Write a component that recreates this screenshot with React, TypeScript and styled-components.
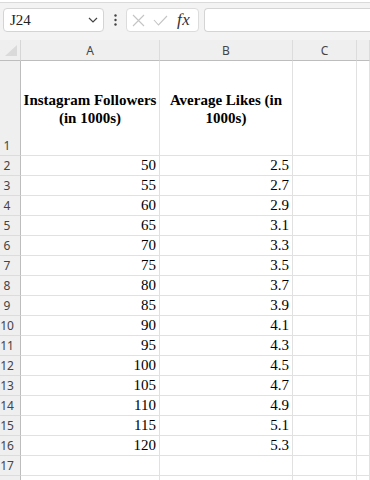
import React from "react";
import styled, { createGlobalStyle } from "styled-components";

const Global = createGlobalStyle`
  html, body { margin: 0; padding: 0; background: #ffffff; }
  body { font-family: "Noto Sans", "Liberation Sans", sans-serif; overflow: hidden; }
  * { box-sizing: border-box; }
`;

const Page = styled.div`
  width: 370px;
  height: 480px;
  overflow: hidden;
  background: #ffffff;
`;

const TopStrip = styled.div`
  height: 3px;
  background: #ffffff;
  border-bottom: 1px solid #dadada;
  box-shadow: 0 1px 2px rgba(0, 0, 0, 0.06);
`;

const FormulaBar = styled.div`
  height: 37px;
  background: #f3f3f3;
  display: flex;
  align-items: flex-start;
  padding: 5px 0 0 3px;
`;

const NameBox = styled.div`
  width: 101px;
  height: 24px;
  background: #ffffff;
  border: 1px solid #d4d4d4;
  border-radius: 4px;
  display: flex;
  align-items: center;
  justify-content: space-between;
  padding: 0 5px 0 6px;
  font-family: "Liberation Serif", serif;
  font-size: 15px;
  color: #222;
`;

const MoreDots = styled.div`
  width: 22px;
  height: 24px;
  display: flex;
  align-items: center;
  justify-content: center;
`;

const FxGroup = styled.div`
  width: 73px;
  height: 24px;
  background: #ffffff;
  border: 1px solid #dcdcdc;
  border-radius: 4px;
  display: flex;
  align-items: center;
  padding: 0 4px 0 5px;
  gap: 8px;
`;

const FxText = styled.span`
  font-family: "Liberation Serif", serif;
  font-style: italic;
  font-size: 17px;
  color: #333;
  margin-left: 1px;
  letter-spacing: 0.5px;
`;

const FormulaInput = styled.div`
  margin-left: 5px;
  flex: 1;
  height: 24px;
  background: #ffffff;
  border: 1px solid #d4d4d4;
  border-right: none;
  border-radius: 4px 0 0 4px;
`;

const Sheet = styled.div`
  display: grid;
  grid-template-columns: 21px 139px 133px 64px 1fr;
`;

const Corner = styled.div`
  height: 21px;
  background: #efefef;
  border-right: 1px solid #d6d6d6;
  border-bottom: 1px solid #bdbdbd;
  position: relative;
`;

const CornerTriangle = styled.div`
  position: absolute;
  left: 5px;
  top: 5px;
  width: 0;
  height: 0;
  border-left: 12px solid transparent;
  border-bottom: 11px solid #dadada;
`;

const ColHeader = styled.div`
  height: 21px;
  background: #efefef;
  border-right: 1px solid #dcdcdc;
  border-bottom: 1px solid #bdbdbd;
  display: flex;
  align-items: center;
  justify-content: center;
  font-size: 12px;
  color: #444;
  padding-top: 1px;
`;

const RowHeader = styled.div<{ $tall?: boolean }>`
  height: ${(p) => (p.$tall ? 95 : 20)}px;
  background: #efefef;
  border-right: 1px solid #bdbdbd;
  border-bottom: 1px solid #dcdcdc;
  display: flex;
  align-items: flex-end;
  justify-content: center;
  padding: 0 6px 1px 0;
  font-size: 12px;
  color: #444;
  line-height: 16px;
`;

const Cell = styled.div<{ $tall?: boolean }>`
  height: ${(p) => (p.$tall ? 95 : 20)}px;
  background: #ffffff;
  border-right: 1px solid #e1e1e1;
  border-bottom: 1px solid #e1e1e1;
  display: flex;
  align-items: flex-end;
  justify-content: flex-end;
  padding: 0 3px 1px 0;
  font-family: "Liberation Serif", serif;
  font-size: 15px;
  line-height: 17px;
  color: #000;
`;

const HeadCell = styled(Cell)`
  align-items: center;
  justify-content: center;
  text-align: center;
  padding: 2px 0 0 0;
  font-weight: bold;
  line-height: 18px;
`;

const data: [number, string][] = [
  [50, "2.5"],
  [55, "2.7"],
  [60, "2.9"],
  [65, "3.1"],
  [70, "3.3"],
  [75, "3.5"],
  [80, "3.7"],
  [85, "3.9"],
  [90, "4.1"],
  [95, "4.3"],
  [100, "4.5"],
  [105, "4.7"],
  [110, "4.9"],
  [115, "5.1"],
  [120, "5.3"],
];

export default function App() {
  return (
    <Page>
      <Global />
      <TopStrip />
      <FormulaBar>
        <NameBox>
          <span>J24</span>
          <svg width="10" height="6" viewBox="0 0 10 6">
            <path d="M1 1 L5 5 L9 1" fill="none" stroke="#444" strokeWidth="1.2" />
          </svg>
        </NameBox>
        <MoreDots>
          <svg width="3" height="12" viewBox="0 0 3 12">
            <circle cx="1.5" cy="1.5" r="1.2" fill="#444" />
            <circle cx="1.5" cy="6" r="1.2" fill="#444" />
            <circle cx="1.5" cy="10.5" r="1.2" fill="#444" />
          </svg>
        </MoreDots>
        <FxGroup>
          <svg width="13" height="13" viewBox="0 0 13 13">
            <path d="M1 1 L12 12 M12 1 L1 12" stroke="#c4c4c4" strokeWidth="1.1" fill="none" />
          </svg>
          <svg width="15" height="11" viewBox="0 0 15 11">
            <path d="M1 5 L5.5 10 L14 1" stroke="#c4c4c4" strokeWidth="1.1" fill="none" />
          </svg>
          <FxText>fx</FxText>
        </FxGroup>
        <FormulaInput />
      </FormulaBar>
      <Sheet>
        <Corner>
          <CornerTriangle />
        </Corner>
        <ColHeader>A</ColHeader>
        <ColHeader>B</ColHeader>
        <ColHeader>C</ColHeader>
        <ColHeader />

        <RowHeader $tall>1</RowHeader>
        <HeadCell $tall>
          Instagram Followers
          <br />
          (in 1000s)
        </HeadCell>
        <HeadCell $tall>
          Average Likes (in
          <br />
          1000s)
        </HeadCell>
        <Cell $tall />
        <Cell $tall />

        {data.map(([a, b], i) => (
          <React.Fragment key={i}>
            <RowHeader>{i + 2}</RowHeader>
            <Cell>{a}</Cell>
            <Cell>{b}</Cell>
            <Cell />
            <Cell />
          </React.Fragment>
        ))}
        <RowHeader>17</RowHeader>
        <Cell />
        <Cell />
        <Cell />
        <Cell />
        <RowHeader />
        <Cell />
        <Cell />
        <Cell />
        <Cell />
      </Sheet>
    </Page>
  );
}
